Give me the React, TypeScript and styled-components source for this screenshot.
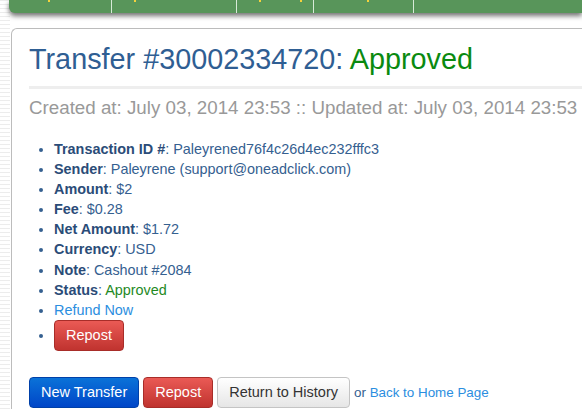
import React from "react";
import styled, { createGlobalStyle } from "styled-components";

const Global = createGlobalStyle`
  html, body { margin: 0; padding: 0; background: #fff; }
  body { font-family: "Liberation Sans", Arial, sans-serif; overflow: hidden; }
  * { box-sizing: border-box; }
`;

const Page = styled.div`
  position: relative;
  width: 582px;
  height: 409px;
  overflow: hidden;
  display: flex;
  flex-direction: column;
  background:
    repeating-linear-gradient(to bottom, #ececec 0 1px, #fff 1px 4px) left top / 10px 100% no-repeat,
    #fff;
`;

const NavBar = styled.div`
  margin-left: 9px;
  height: 13px;
  background: #58955a;
  border-bottom-left-radius: 6px;
  box-shadow: 0 3px 5px rgba(0, 0, 0, 0.55);
  display: flex;
  flex-shrink: 0;
`;

const NavItem = styled.div<{ $w: number; $last?: boolean }>`
  width: ${(p) => p.$w}px;
  height: 100%;
  border-right: ${(p) => (p.$last ? "none" : "1px solid #d8ead8")};
  position: relative;
`;

const NavDot = styled.span<{ $x: number }>`
  position: absolute;
  top: 0;
  left: ${(p) => p.$x}px;
  width: 2px;
  height: 2px;
  background: #f4d23c;
`;

const Panel = styled.div`
  margin: 15px 0 0 11px;
  flex: 1;
  border: 1px solid #bcbcbc;
  border-right: none;
  border-bottom: none;
  border-top-left-radius: 6px;
  padding: 10px 0 0 17px;
`;

const Title = styled.h1`
  margin: 0;
  font-weight: normal;
  font-size: 28.8px;
  line-height: 40px;
  color: #2f5e93;
  white-space: nowrap;
  padding-bottom: 7px;
  border-bottom: 3px solid #eeeeee;
`;

const Green = styled.span`
  color: #0a8a10;
`;

const Sub = styled.div`
  margin-top: 6px;
  font-size: 18.75px;
  line-height: 26px;
  color: #999;
  white-space: nowrap;
`;

const List = styled.ul`
  margin: 18px 0 0 0;
  padding-left: 25px;
  color: #356090;
  font-size: 14.4px;
  line-height: 20.1px;
  li::marker { color: #356090; }
`;

const Item = styled.li`
  white-space: nowrap;
`;

const Label = styled.b`
  color: #2b4c78;
`;

const Link = styled.a`
  color: #2b8ee0;
  text-decoration: none;
`;

const StatusVal = styled.span`
  color: #1f8a1f;
`;

const Btn = styled.button<{ $kind: "blue" | "red" | "plain" }>`
  font-family: "Liberation Sans", Arial, sans-serif;
  font-size: 14.5px;
  height: 31px;
  padding: 0 11px;
  border-radius: 4px;
  cursor: pointer;
  ${(p) =>
    p.$kind === "blue"
      ? `background: linear-gradient(#0a72d8, #0046c8); color: #fff; border: 1px solid #0040a8;`
      : p.$kind === "red"
      ? `background: linear-gradient(#ea5a55, #c0332f); color: #fff; border: 1px solid #a82d29;`
      : `background: linear-gradient(#ffffff, #e6e6e6); color: #333; border: 1px solid #c4c4c4;`}
`;

const RepostItemBtn = styled(Btn)`
  margin-top: 0;
  margin-bottom: 3px;
`;

const Actions = styled.div`
  margin-top: 23px;
  display: flex;
  align-items: center;
  gap: 4px;
  font-size: 13.4px;
  color: #356090;
  white-space: nowrap;
`;

const Or = styled.span`
  margin-left: 0;
`;

export default function App() {
  return (
    <>
      <Global />
      <Page>
        <NavBar>
          <NavItem $w={104}>
            <NavDot $x={39} />
          </NavItem>
          <NavItem $w={126}>
            <NavDot $x={22} />
          </NavItem>
          <NavItem $w={78}>
            <NavDot $x={22} />
            <NavDot $x={63} />
          </NavItem>
          <NavItem $w={101}>
            <NavDot $x={53} />
          </NavItem>
          <NavItem $w={170} $last />
        </NavBar>
        <Panel>
          <Title>
            Transfer #30002334720: <Green>Approved</Green>
          </Title>
          <Sub>Created at: July 03, 2014 23:53 :: Updated at: July 03, 2014 23:53</Sub>
          <List>
            <Item>
              <Label>Transaction ID #</Label>: Paleyrened76f4c26d4ec232fffc3
            </Item>
            <Item>
              <Label>Sender</Label>: Paleyrene (support@oneadclick.com)
            </Item>
            <Item>
              <Label>Amount</Label>: $2
            </Item>
            <Item>
              <Label>Fee</Label>: $0.28
            </Item>
            <Item>
              <Label>Net Amount</Label>: $1.72
            </Item>
            <Item>
              <Label>Currency</Label>: USD
            </Item>
            <Item>
              <Label>Note</Label>: Cashout #2084
            </Item>
            <Item>
              <Label>Status</Label>: <StatusVal>Approved</StatusVal>
            </Item>
            <Item>
              <Link href="#">Refund Now</Link>
            </Item>
            <Item>
              <RepostItemBtn $kind="red">Repost</RepostItemBtn>
            </Item>
          </List>
          <Actions>
            <Btn $kind="blue">New Transfer</Btn>
            <Btn $kind="red">Repost</Btn>
            <Btn $kind="plain">Return to History</Btn>
            <Or>
              or <Link href="#">Back to Home Page</Link>
            </Or>
          </Actions>
        </Panel>
      </Page>
    </>
  );
}
